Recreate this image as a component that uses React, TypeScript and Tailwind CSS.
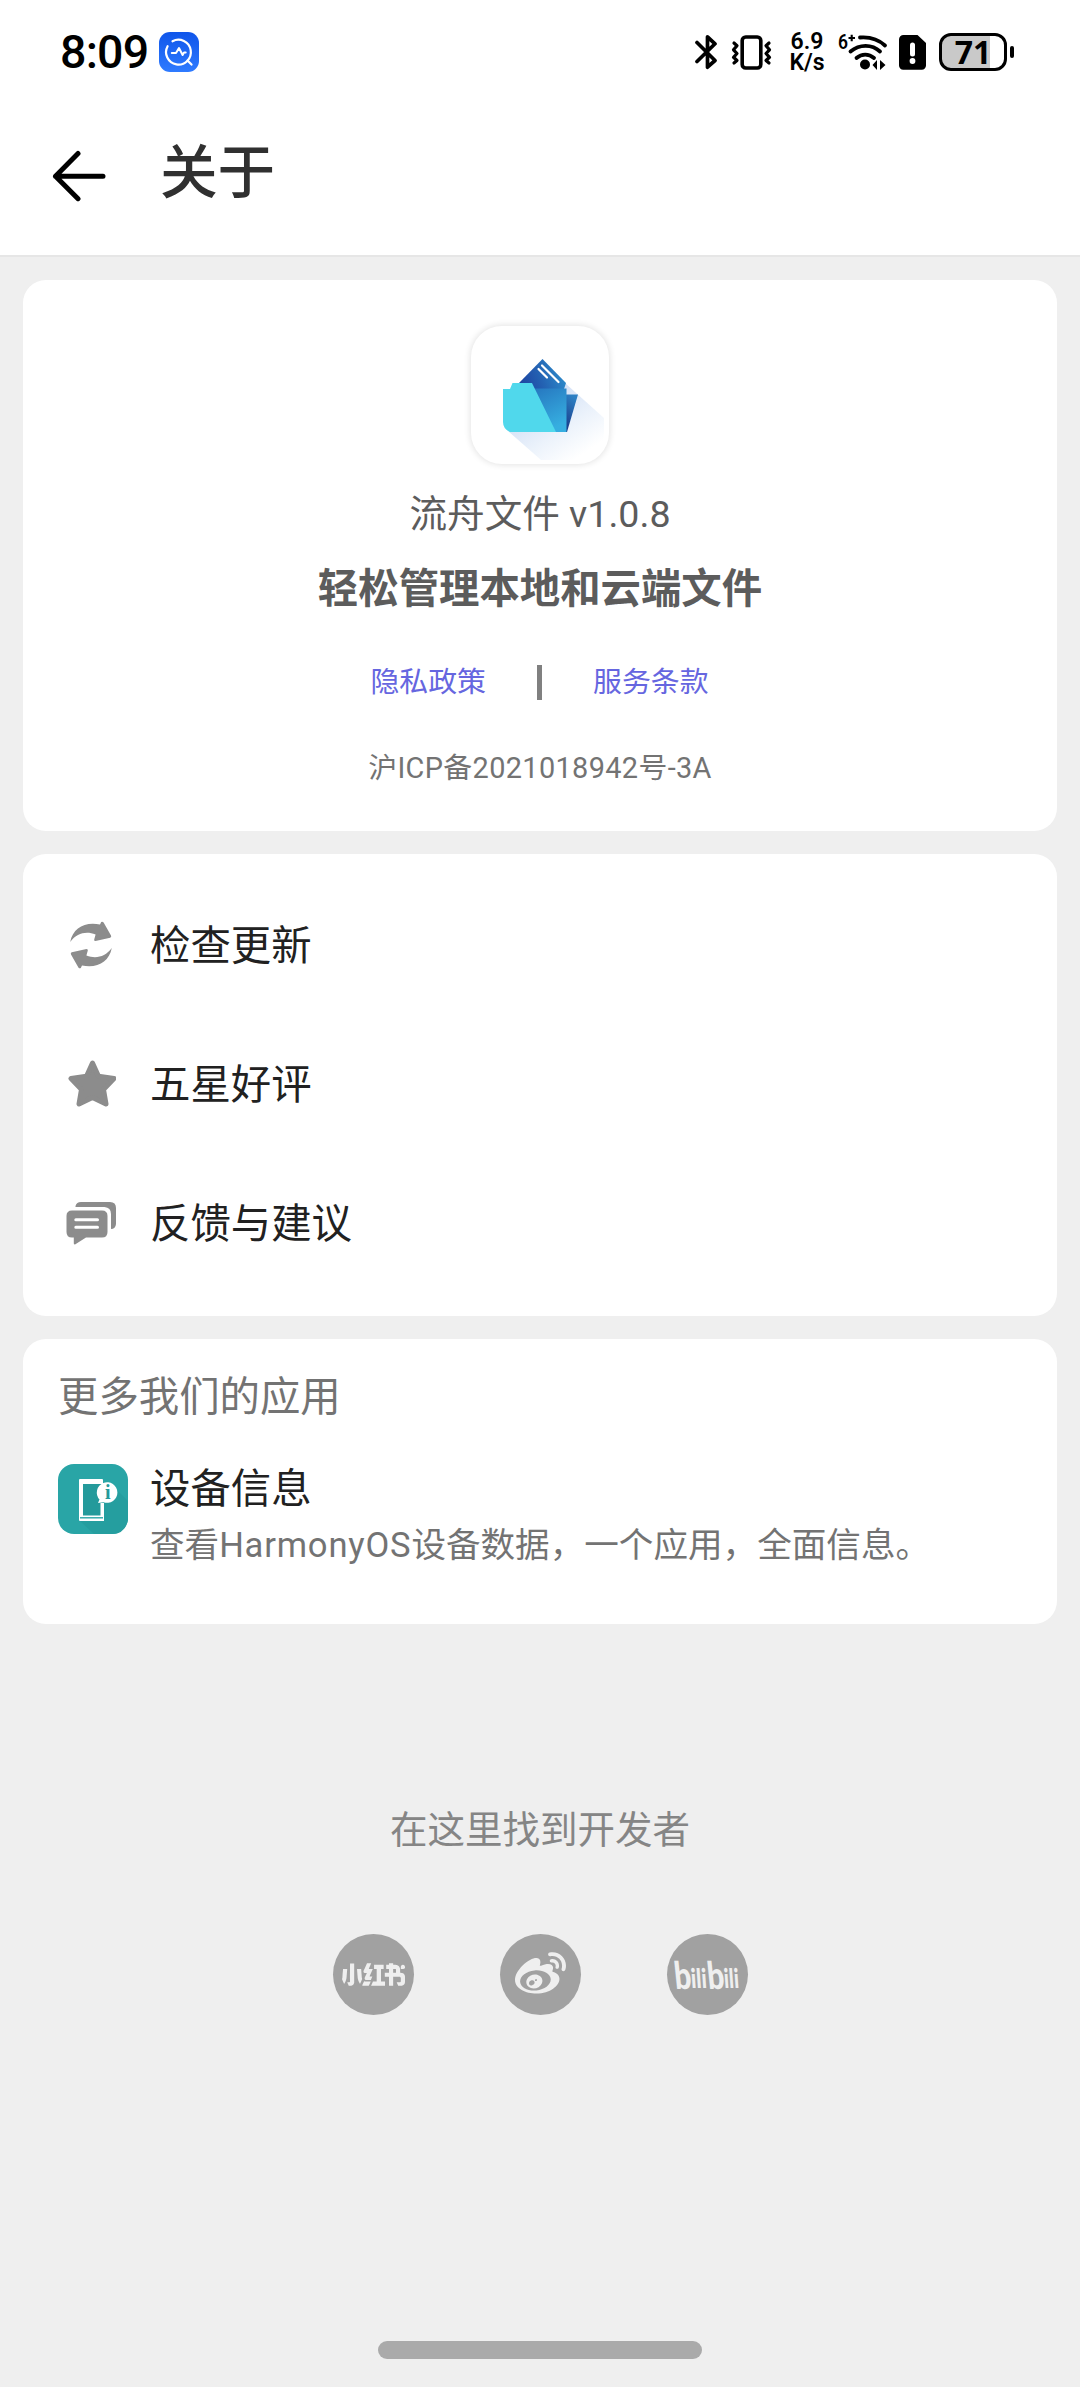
import React from "react";
import { FaWeibo } from "react-icons/fa";
import { SiXiaohongshu } from "react-icons/si";

function AnalyticsBadge() {
  return (
    <svg width="40" height="40" viewBox="0 0 40 40" fill="none">
      <defs>
        <linearGradient id="badge" x1="0" y1="0" x2="0" y2="1">
          <stop offset="0" stopColor="#0f55ea" />
          <stop offset="1" stopColor="#2f7bff" />
        </linearGradient>
      </defs>
      <rect width="40" height="40" rx="11" fill="url(#badge)" />
      <g stroke="#fff" strokeWidth="2.2" strokeLinecap="round" strokeLinejoin="round">
        <path d="M13.500 9.300A12.400 12.400 0 1 1 8.600 14.200" />
        <path d="M28.500 28.500L32.500 32.600" />
        <path d="M12.800 21h4.200l3-5 3.600 7 1.400-2.400h1.700" strokeWidth="2" />
      </g>
    </svg>
  );
}

function BluetoothIcon() {
  return (
    <svg width="23" height="36" viewBox="0 0 23 36" fill="none" stroke="#000" strokeWidth="3.700" strokeLinecap="round" strokeLinejoin="round">
      <path d="M2 8.500L20 26.500L12.500 33.200V2.800L20 9.800L2 27.500" />
    </svg>
  );
}

function VibrateIcon() {
  return (
    <svg width="41" height="35" viewBox="0 0 41 35" fill="none" stroke="#000" strokeLinecap="round" strokeLinejoin="round">
      <rect x="11.200" y="2" width="18.600" height="31" rx="3.500" strokeWidth="3.600" />
      <path d="M3 8l3 2.700-3.500 4.100L6 18.500l-3.500 3.800L6 25.500 3 28" strokeWidth="3.200" />
      <path d="M38 8l-3 2.700 3.500 4.100L35 18.500l3.500 3.800-3.500 3.200 3 2.500" strokeWidth="3.200" />
    </svg>
  );
}

function WifiIcon() {
  return (
    <svg className="overflow-visible" width="50" height="38" viewBox="0 0 50 38" fill="none" stroke="#000" strokeWidth="3.800" strokeLinecap="round">
      <text x="0" y="15.500" fontSize="20" fontWeight="600" fontFamily="Roboto" fill="#000" stroke="none" textLength="10" lengthAdjust="spacingAndGlyphs">6</text>
      <path d="M10.500 5h6.500M13.700 1.800v6.500" strokeWidth="2.100" strokeLinecap="butt" />
      <path d="M22 4.500c10-.8 18.500 2 25 8" />
      <path d="M12.500 18.500c9-7.600 21.500-7.600 29.500 0" />
      <path d="M18.500 25c5.200-4.600 12.300-4.600 17.500 0" />
      <circle cx="27" cy="31.500" r="5" fill="#000" stroke="none" />
      <path d="M39 27v10l-4.500-5zM42 27v10l5.500-5z" fill="#000" stroke="none" />
    </svg>
  );
}

function SimAlertIcon() {
  return (
    <svg width="27" height="35" viewBox="0 0 27 35">
      <path d="M4.500 0H18.500L27 8V30.500a4.200 4.200 0 0 1-4.200 4.200H4.200A4.200 4.200 0 0 1 0 30.500V4.500A4.500 4.500 0 0 1 4.500 0z" />
      <rect x="11" y="7.500" width="5" height="14" rx="2.500" fill="#fff" />
      <circle cx="13.500" cy="26" r="2.900" fill="#fff" />
    </svg>
  );
}

function Battery() {
  return (
    <div className="flex items-center gap-[3px]">
      <div className="h-[38px] w-[68px] rounded-[12px] border-[3px] border-black bg-[linear-gradient(90deg,#c9c9c9_78%,#ffffff_78%)] text-center font-['Noto_Sans'] text-[32px]/[32px] font-bold text-black">
        71
      </div>
      <div className="h-[12px] w-[4px] rounded-full bg-black" />
    </div>
  );
}

function BackArrow() {
  return (
    <svg width="54" height="52" viewBox="0 0 54 52" fill="none" stroke="#000" strokeWidth="5" strokeLinecap="round" strokeLinejoin="round">
      <path d="M26 3.500L3.500 26.300L26 48.700M3.500 26.300H51" />
    </svg>
  );
}

function FolderLogo() {
  return (
    <svg width="138" height="138" viewBox="0 0 138 138">
      <defs>
        <linearGradient id="shade" gradientUnits="userSpaceOnUse" x1="72" y1="68" x2="112" y2="128">
          <stop offset="0" stopColor="#d0def5" />
          <stop offset="0.550" stopColor="#ebf2fb" />
          <stop offset="1" stopColor="#ffffff" />
        </linearGradient>
        <linearGradient id="card" x1="0" y1="0.700" x2="1" y2="0.350">
          <stop offset="0" stopColor="#1c3f9f" />
          <stop offset="0.450" stopColor="#235eb0" />
          <stop offset="1" stopColor="#2c8dcc" />
        </linearGradient>
        <linearGradient id="front" x1="0" y1="0" x2="0.400" y2="1">
          <stop offset="0" stopColor="#2676bf" />
          <stop offset="1" stopColor="#36aee0" />
        </linearGradient>
        <linearGradient id="back" x1="0.600" y1="0" x2="0.200" y2="1">
          <stop offset="0" stopColor="#2c7fc3" />
          <stop offset="1" stopColor="#16307f" />
        </linearGradient>
      </defs>
      <path d="M94 57L133 92V108Q132 130 108 134H70L36 104Z" fill="url(#shade)" />
      <path d="M71.500 33L95 57L88 78H60L48 57Z" fill="url(#card)" />
      <path d="M67.500 43L76 51.500M71 39.500L87.500 56" stroke="#fff" strokeWidth="2.200" strokeLinecap="round" />
      <path d="M88 68.500H107L96 106H88Z" fill="url(#back)" />
      <path d="M61 62.500H95.500V106H82Z" fill="url(#front)" />
      <path d="M41.500 57H61L85 106H39Q32 103 32 96V63H39Z" fill="#50d8ec" />
    </svg>
  );
}

const syncArrow =
  "M4.200 22C7 8 18.500 1.500 34 4.500L35.200 2.100Q36.500 1 37.600 2.600L45 15.600Q45.800 17.200 44.200 17.700L29.500 21Q27.800 21 28.200 19.500L29.600 14.500C20 11 11 13 4.200 22Z";

function SyncIcon() {
  return (
    <svg width="50" height="50" viewBox="0 0 50 50" fill="#8c8c8c">
      <path d={syncArrow} />
      <path d={syncArrow} transform="rotate(180 25 25)" />
    </svg>
  );
}

function StarIcon() {
  return (
    <svg width="50" height="50" viewBox="0 0 50 50" fill="#8c8c8c" stroke="#8c8c8c" strokeWidth="5" strokeLinejoin="round">
      <path d="M26.500 4L32.500 17.300L48 19.500L37.500 30.500L40 45L26.500 38.500L13 45L15.500 30.500L5 19.500L20.500 17.300Z" />
    </svg>
  );
}

function ChatIcon() {
  return (
    <svg width="50" height="50" viewBox="0 0 50 50">
      <path d="M9.500 8Q10.500 4 15 4H44Q50 4 50 10V26Q49.500 31 45 31V16Q45 9.500 38.500 9L9.500 9Z" fill="#8c8c8c" />
      <path d="M6 12.500H36Q41.500 12.500 41.500 18V34Q41.500 39.500 36 39.500H20L9 46.500Q7.800 46.500 7.800 45.500V39.500H6Q.5 39.500 .5 34V18Q.5 12.500 6 12.500Z" fill="#8c8c8c" />
      <path d="M9.800 21.800H31.500M9.800 29.200H31.500" stroke="#fff" strokeWidth="3" strokeLinecap="round" />
    </svg>
  );
}

function DeviceIcon() {
  return (
    <svg width="70" height="70" viewBox="0 0 70 70">
      <rect width="70" height="70" rx="16" fill="#29a5a6" />
      <path d="M44 34L59 26L70 37V56Q67 70 54 70H36L22 57Z" fill="#259e9f" />
      <rect x="24" y="18" width="20" height="34" fill="#249a9b" />
      <path d="M22 15h22a1 1 0 0 1 1 1v4H25v31.500h17.500V39H46v18H22a1 1 0 0 1-1-1V16a1 1 0 0 1 1-1z" fill="#fff" />
      <path d="M22 53.800H45" stroke="#29a5a6" strokeWidth="1.400" />
      <path d="M40 39l1.500-3.500a10.300 10.300 0 1 1 4 2.700Z" fill="#fff" />
      <text x="49.700" y="35" textAnchor="middle" fontFamily="Liberation Serif" fontWeight="700" fontSize="20" fill="#249a9b">i</text>
    </svg>
  );
}

function BilibiliWordmark() {
  return (
    <svg className="overflow-visible" width="66" height="32" viewBox="0 0 66 32" fill="#efefef" fontFamily="Lato" fontWeight="900">
      <text transform="translate(1.500 30) skewX(6)" fontSize="38" textLength="17" lengthAdjust="spacingAndGlyphs">b</text>
      <text transform="translate(17.500 28.500) skewX(4)" fontSize="27" textLength="16" lengthAdjust="spacingAndGlyphs">ili</text>
      <text transform="translate(34.500 30) skewX(6)" fontSize="38" textLength="17" lengthAdjust="spacingAndGlyphs">b</text>
      <text transform="translate(50.500 28.500) skewX(4)" fontSize="27" textLength="15" lengthAdjust="spacingAndGlyphs">ili</text>
    </svg>
  );
}

const menu = [
  { label: "检查更新", icon: <SyncIcon /> },
  { label: "五星好评", icon: <StarIcon /> },
  { label: "反馈与建议", icon: <ChatIcon /> },
];

export default function App() {
  return (
    <div className="flex h-[2387px] w-[1080px] flex-col bg-[#efefef] font-[Roboto,'Noto_Sans_CJK_SC',sans-serif] whitespace-nowrap">
      <header className="h-[257px] border-b-2 border-[#e6e6e6] bg-white">
        <div className="flex h-[104px] items-center pl-[60px]">
          <span className="w-[99px] text-[46.500px]/[60px] font-medium tracking-[-0.8px] text-black">8:09</span>
          <AnalyticsBadge />
          <div className="ml-auto flex items-center pr-[66px]">
            <BluetoothIcon />
            <div className="ml-[13px]"><VibrateIcon /></div>
            <div className="ml-[17px] flex w-[36px] flex-col items-center text-[23px]/[21px] font-semibold text-black">
              <div>6.9</div>
              <div>K/s</div>
            </div>
            <div className="ml-[13px]"><WifiIcon /></div>
            <div className="ml-[11px]"><SimAlertIcon /></div>
            <div className="ml-[13px]"><Battery /></div>
          </div>
        </div>
        <div className="flex h-[144px] items-center pl-[52px]">
          <BackArrow />
          <h1 className="mb-[4px] ml-[54px] text-[57.600px]/[64px] font-medium text-[#303030]">关于</h1>
        </div>
      </header>

      <main className="flex flex-col gap-[23px] px-[23px] pt-[23px]">
        <section className="flex h-[551px] flex-col items-center rounded-[23px] bg-white pt-[46px]">
          <div className="size-[138px] overflow-hidden rounded-[31px] bg-white shadow-[0_0_6px_1px_rgba(0,0,0,0.11)]">
            <FolderLogo />
          </div>
          <p className="mt-[23px] text-[37.600px]/[54px] text-[#5c5c5c]">流舟文件 v1.0.8</p>
          <p className="mt-[21px] text-[40.400px]/[56px] font-bold text-[#5c5c5c]">轻松管理本地和云端文件</p>
          <div className="mt-[41px] mr-[1px] flex h-[46px] items-center text-[28.900px]/[46px] text-[#6666e0]">
            <span>隐私政策</span>
            <i className="mx-[51px] h-[35px] w-[5px] bg-[#808080]" />
            <span>服务条款</span>
          </div>
          <p className="mt-[42px] text-[28.900px]/[42px] tracking-[0.35px] text-[#737373]">沪ICP备2021018942号-3A</p>
        </section>

        <section className="flex h-[462px] flex-col rounded-[23px] bg-white py-[23px]">
          {menu.map((item) => (
            <div key={item.label} className="flex flex-1 items-center pl-[43px]">
              <div className="mb-[2px]">{item.icon}</div>
              <span className="mt-[2px] ml-[34px] text-[40.400px]/[56px] text-[#212121]">{item.label}</span>
            </div>
          ))}
        </section>

        <section className="h-[285px] rounded-[23px] bg-white pt-[31px] pl-[35px]">
          <h2 className="text-[40.400px]/[56px] text-[#737373]">更多我们的应用</h2>
          <div className="mt-[36px] flex">
            <div className="mt-[2px]"><DeviceIcon /></div>
            <div className="ml-[22px]">
              <p className="text-[40.400px]/[56px] text-[#212121]">设备信息</p>
              <p className="text-[34.600px]/[54px] text-[#737373]">
                查看<span className="tracking-[0.8px]">HarmonyOS</span>设备数据，一个应用，全面信息。
              </p>
            </div>
          </div>
        </section>
      </main>

      <footer className="flex flex-1 flex-col items-center pt-[179px]">
        <p className="text-[37.500px]/[54px] text-[#858585]">在这里找到开发者</p>
        <div className="mt-[77px] flex gap-[86px]">
          <div className="flex size-[81px] items-center justify-center rounded-full bg-[#a1a1a1] text-[#efefef]">
            <SiXiaohongshu size={63} />
          </div>
          <div className="flex size-[81px] items-center justify-center rounded-full bg-[#a1a1a1] text-[#efefef]">
            <FaWeibo size={51} />
          </div>
          <div className="flex size-[81px] items-center justify-center rounded-full bg-[#a1a1a1]">
            <BilibiliWordmark />
          </div>
        </div>
        <div className="mt-auto mb-[28px] h-[18px] w-[324px] rounded-full bg-[#aaaaaa]" />
      </footer>
    </div>
  );
}
